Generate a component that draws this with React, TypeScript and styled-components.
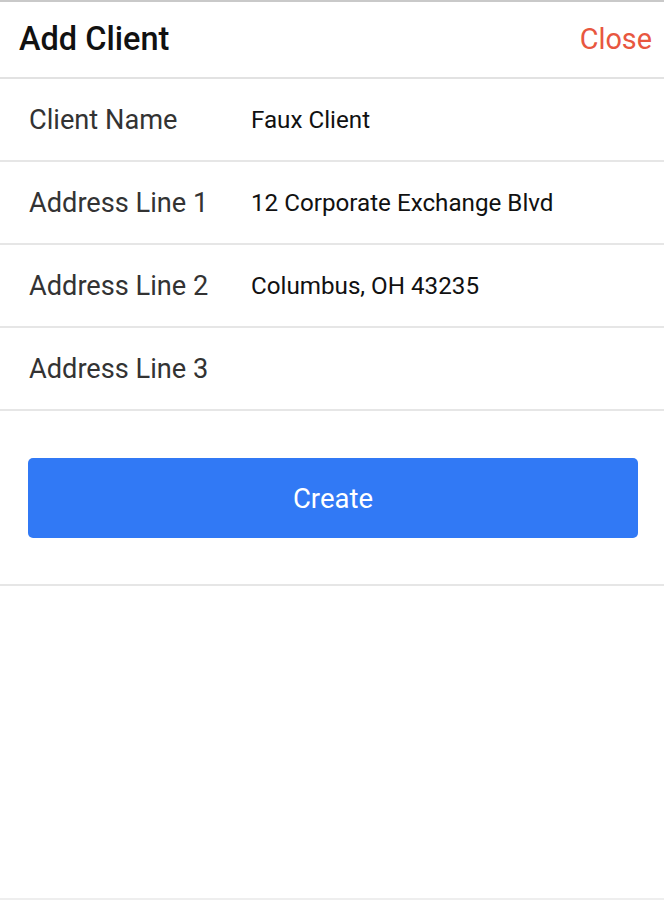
import React from 'react'
import styled, { createGlobalStyle } from 'styled-components'

const GlobalStyle = createGlobalStyle`
  html, body {
    margin: 0;
    padding: 0;
    background: #fff;
    font-family: Roboto, 'Liberation Sans', sans-serif;
  }
`

const Screen = styled.div`
  width: 664px;
  height: 900px;
  box-sizing: border-box;
  border-top: 2px solid #c9c9c9;
  border-bottom: 2px solid #eeeeee;
  display: flex;
  flex-direction: column;
`

const Header = styled.div`
  height: 75px;
  display: flex;
  align-items: center;
  justify-content: space-between;
  padding: 0 12px 0 19px;
  border-bottom: 2px solid #e2e2e2;
`

const Title = styled.h1`
  margin: 0 0 2px;
  font-size: 32.5px;
  font-weight: 500;
  color: #111;
`

const CloseButton = styled.button`
  border: none;
  background: none;
  padding: 0;
  margin-bottom: 2px;
  font-family: inherit;
  font-size: 28.8px;
  color: #e8573f;
`

const Row = styled.div`
  height: 81px;
  display: flex;
  align-items: center;
  padding-left: 29px;
  border-bottom: 2px solid #e6e6e6;
`

const Label = styled.div`
  width: 222px;
  font-size: 27.2px;
  color: #333;
`

const Value = styled.div`
  font-size: 24.2px;
  color: #111;
`

const Actions = styled.div`
  padding: 47px 26px 46px 28px;
  border-bottom: 2px solid #e6e6e6;
`

const PrimaryButton = styled.button`
  width: 100%;
  height: 80px;
  border: none;
  border-radius: 5px;
  background: #3179f5;
  color: #fff;
  font-family: inherit;
  font-size: 27.5px;
`

const fields = [
  { label: 'Client Name', value: 'Faux Client' },
  { label: 'Address Line 1', value: '12 Corporate Exchange Blvd' },
  { label: 'Address Line 2', value: 'Columbus, OH 43235' },
  { label: 'Address Line 3', value: '' },
]

const App: React.FC = () => {
  return (
    <>
      <GlobalStyle />
      <Screen>
        <Header>
          <Title>Add Client</Title>
          <CloseButton>Close</CloseButton>
        </Header>
        {fields.map((field) => (
          <Row key={field.label}>
            <Label>{field.label}</Label>
            <Value>{field.value}</Value>
          </Row>
        ))}
        <Actions>
          <PrimaryButton>Create</PrimaryButton>
        </Actions>
      </Screen>
    </>
  )
}
export default App
